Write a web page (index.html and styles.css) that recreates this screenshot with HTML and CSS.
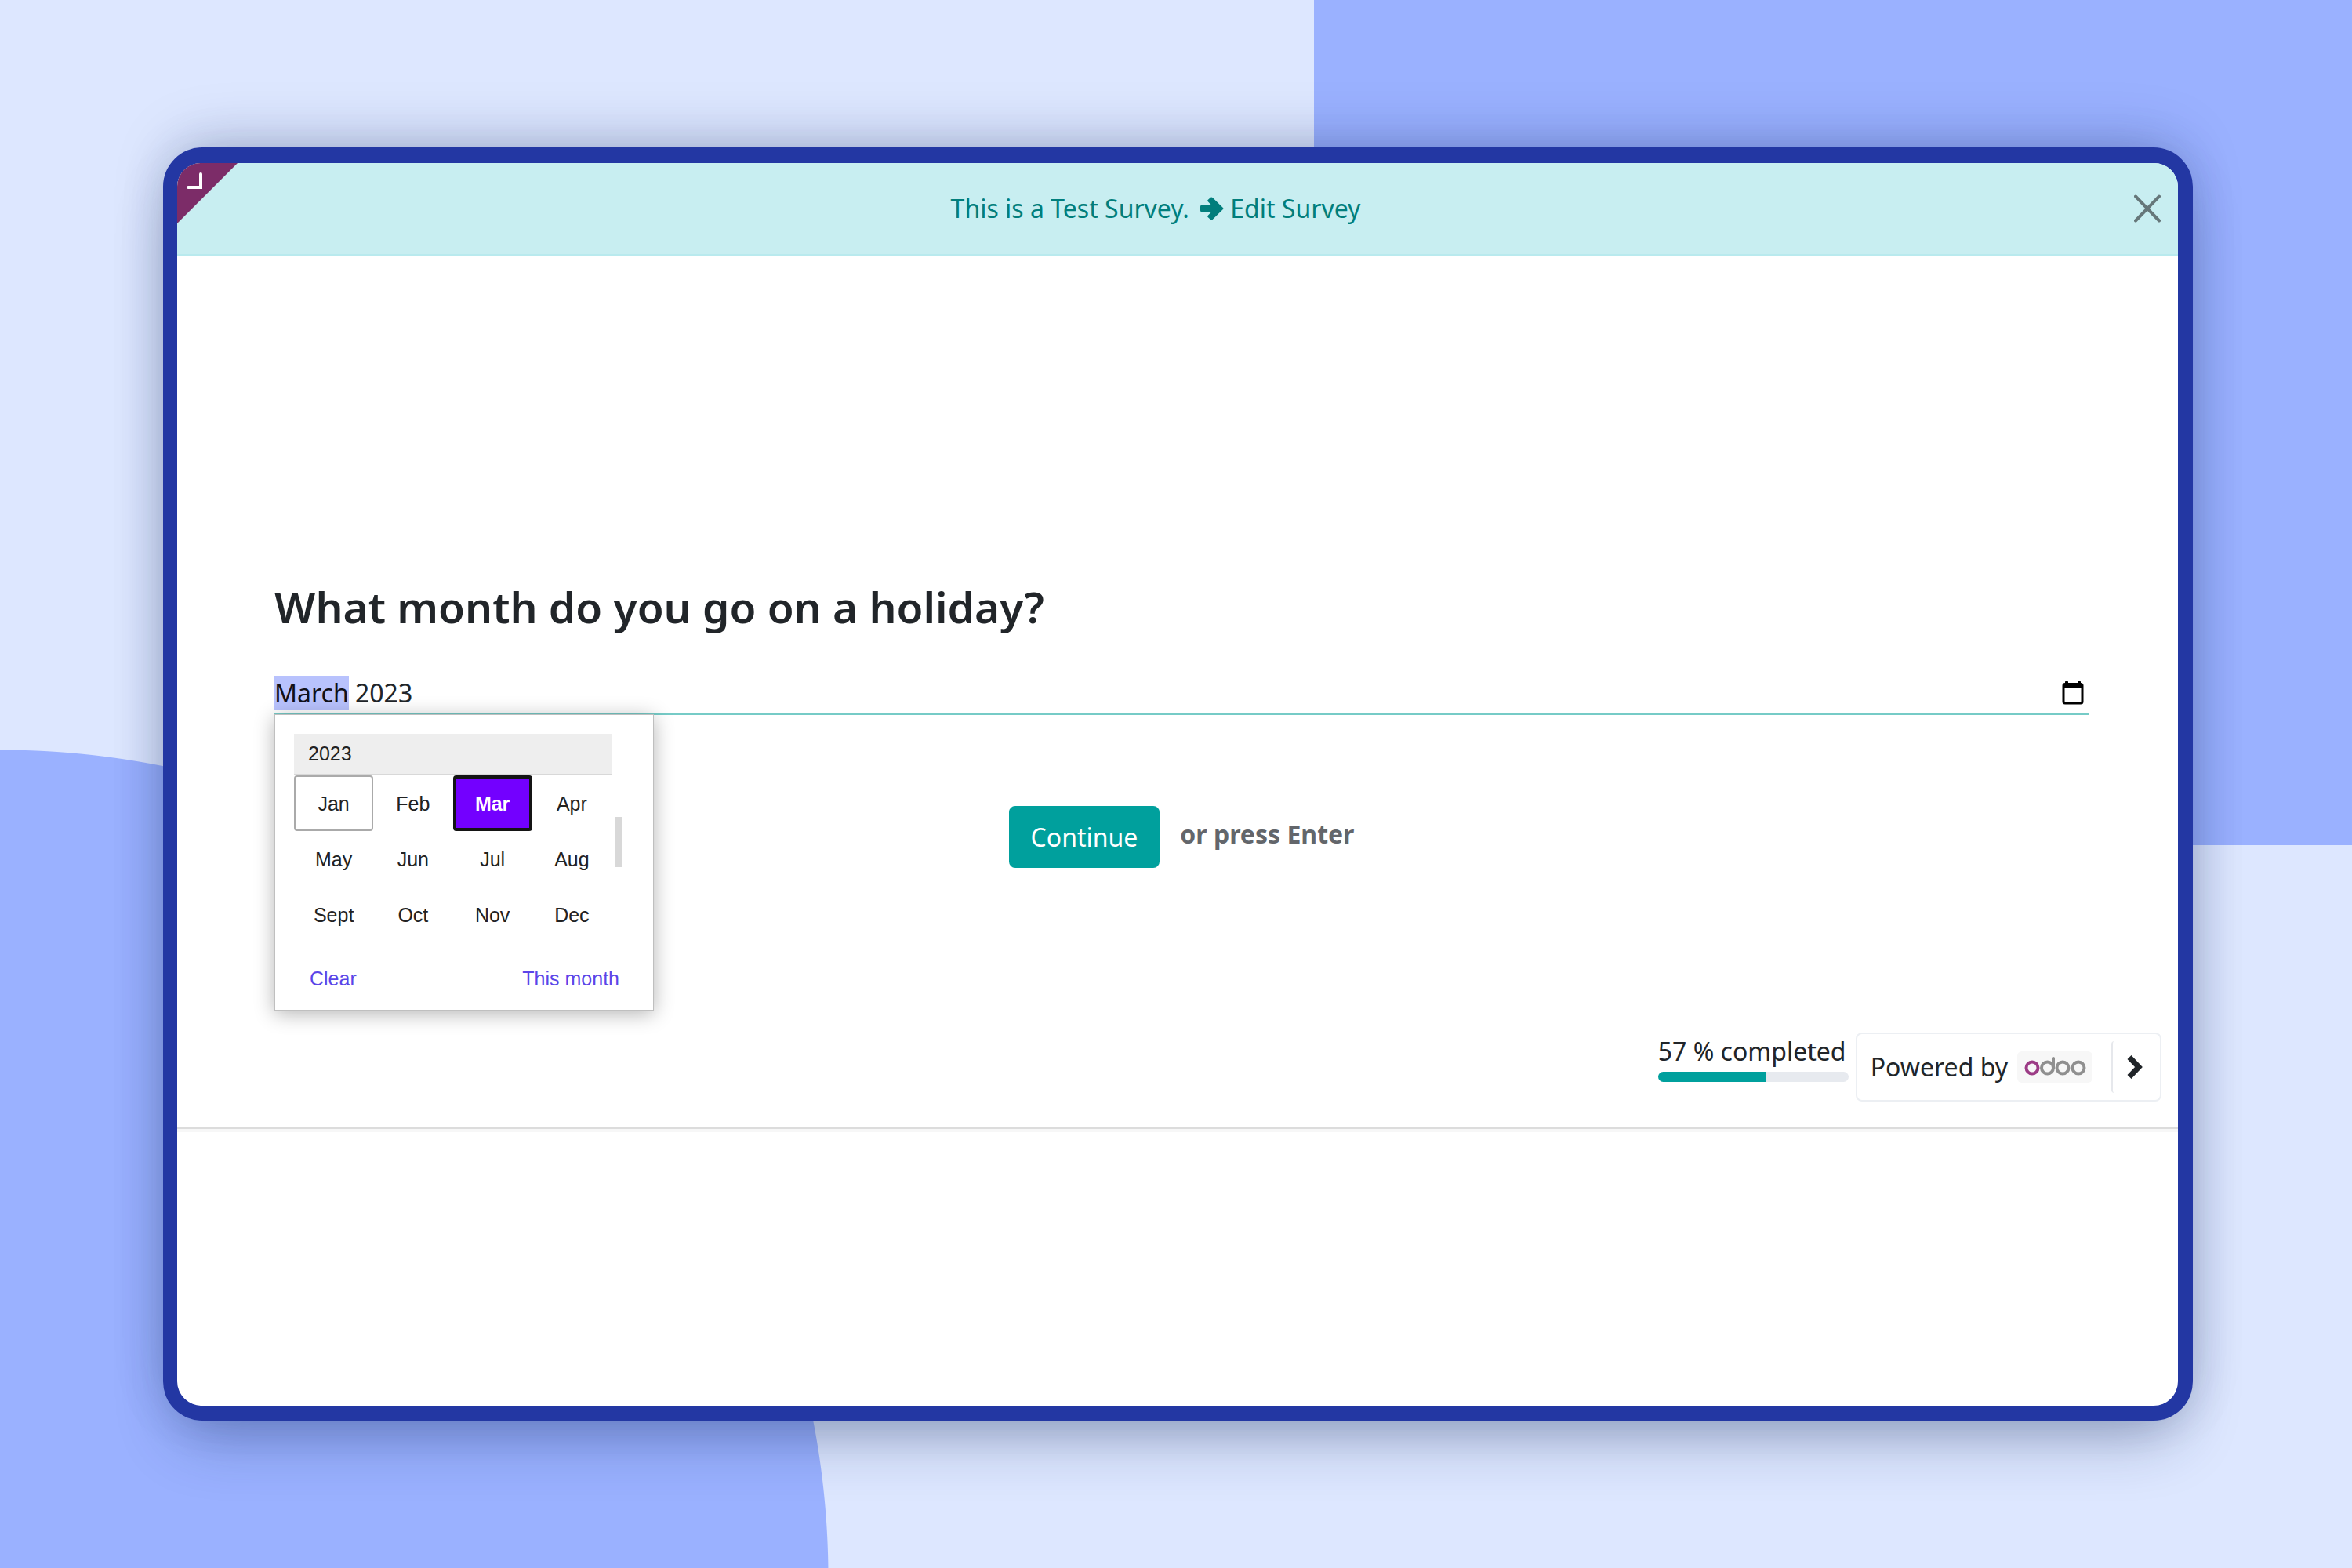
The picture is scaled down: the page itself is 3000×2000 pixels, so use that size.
FILE: index.html
```html
<!DOCTYPE html>
<html lang="en">
<head>
  <meta charset="utf-8">
  <meta name="viewport" content="width=device-width, initial-scale=1">
  <title>Survey</title>
  <link rel="stylesheet" href="styles.css">
</head>
<body>
  <div class="frame">
    <header class="banner">
      <a class="corner" href="#" aria-label="Open backend">
        <svg viewBox="0 0 77 77" aria-hidden="true">
          <path d="M0 0H77L0 77Z" fill="#7c2c68"/>
          <path d="M14 31H30V14" fill="none" stroke="#fff" stroke-width="4" stroke-linecap="round" stroke-linejoin="miter"/>
        </svg>
      </a>
      <p class="banner-text">This is a Test Survey.
        <a class="banner-link" href="#"><svg class="arrow" viewBox="0 0 28 28" aria-hidden="true"><path d="M2 9.700H13L9 5.700Q8.100 4.700 9 3.700L12.400 .800Q13.500 0 14.600 1L27 13Q28 14 27 15L14.600 27Q13.500 28 12.400 27.200L9 24.300Q8.100 23.300 9 22.300L13 18.300H2Q0 18.300 0 16.300V11.700Q0 9.700 2 9.700Z" fill="currentColor"/></svg>Edit Survey</a>
      </p>
      <button class="close" type="button" aria-label="Close">
        <svg viewBox="0 0 34 36" aria-hidden="true"><path d="M2 2.500L32 33.500M32 2.500L2 33.500" fill="none" stroke="currentColor" stroke-width="4" stroke-linecap="round"/></svg>
      </button>
    </header>

    <main class="survey">
      <form class="question">
        <h1 class="title"><label for="month">What month do you go on a holiday?</label></h1>
        <div class="field">
          <input class="month" id="month" type="text" value="March 2023" autocomplete="off" autofocus>
          <button class="calendar" type="button" aria-label="Show month picker">
            <svg viewBox="0 0 28 32" aria-hidden="true">
              <path d="M4 3H24Q27.500 3 27.500 6.500V27Q27.500 30.500 24 30.500H4Q.5 30.500 .5 27V6.500Q.5 3 4 3ZM3.500 10V26.500Q3.500 27.500 4.500 27.500H23.500Q24.500 27.500 24.500 26.500V10Z" fill="#000" fill-rule="evenodd"/>
              <path d="M6 2V4M22 2V4" stroke="#000" stroke-width="4" stroke-linecap="round"/>
            </svg>
          </button>

          <div class="picker">
            <div class="picker-body">
              <div class="picker-year">
                <div class="year">2023</div>
                <div class="months">
                  <button class="cell cell-first" type="button">Jan</button>
                  <button class="cell" type="button">Feb</button>
                  <button class="cell cell-selected" type="button" aria-pressed="true">Mar</button>
                  <button class="cell" type="button">Apr</button>
                  <button class="cell" type="button">May</button>
                  <button class="cell" type="button">Jun</button>
                  <button class="cell" type="button">Jul</button>
                  <button class="cell" type="button">Aug</button>
                  <button class="cell" type="button">Sept</button>
                  <button class="cell" type="button">Oct</button>
                  <button class="cell" type="button">Nov</button>
                  <button class="cell" type="button">Dec</button>
                </div>
              </div>
              <div class="scroll-thumb"></div>
            </div>
            <div class="picker-actions">
              <button class="action" type="button">Clear</button>
              <button class="action" type="button">This month</button>
            </div>
          </div>
        </div>
        <div class="submit-row">
          <button class="continue" type="submit">Continue</button>
          <p class="hint">or press Enter</p>
        </div>
      </form>

      <footer class="footer">
        <div class="progress">
          <span id="progress-label">57 % completed</span>
          <div class="track" role="progressbar" aria-labelledby="progress-label" aria-valuenow="57" aria-valuemin="0" aria-valuemax="100">
            <div class="fill" style="width: 57%"></div>
          </div>
        </div>
        <div class="brand">
          <a class="powered" href="#">Powered by
            <svg class="logo" viewBox="0 0 96 40" role="img" aria-label="odoo">
              <rect width="96" height="40" rx="6" fill="#f7f7f7"/>
              <g fill="none" stroke="#8f8f8f" stroke-width="4">
                <circle cx="38.500" cy="21" r="7.500"/>
                <path d="M46 21V9" stroke-linecap="round"/>
                <circle cx="58" cy="21" r="7.500"/>
                <circle cx="78" cy="21" r="7.500"/>
                <circle cx="19" cy="21" r="7.500" stroke="#9c3c86"/>
              </g>
            </svg>
          </a>
          <button class="next" type="button" aria-label="Next">
            <svg viewBox="0 0 20 30" aria-hidden="true"><path d="M3 2.500L15 15L3 27.500" fill="none" stroke="currentColor" stroke-width="7"/></svg>
          </button>
        </div>
      </footer>
    </main>
  </div>
  <script src="script.js"></script>
</body>
</html>
```
FILE: styles.css
```css
* {
  box-sizing: border-box;
}

body {
  position: relative;
  display: flex;
  min-height: 100vh;
  margin: 0;
  padding: 188px 203px 188px 208px;
  overflow-x: hidden;
  background:
    linear-gradient(#9ab1ff, #9ab1ff) top right / 44.133% 1078px no-repeat,
    radial-gradient(circle at 0 2013px, #9ab1ff 1056px, transparent 1057px),
    #dde7ff;
  color: #212529;
  font: 32px/44px "Noto Sans", "Open Sans", sans-serif;
}

h1,
p {
  margin: 0;
}

button {
  padding: 0;
  border: 0;
  background: none;
  color: inherit;
  font: inherit;
}

svg {
  display: block;
}

.frame {
  display: flex;
  flex: 1;
  flex-direction: column;
  min-width: 0;
  border: 19px solid #2337a3;
  border-width: 20px 19px 19px 18px;
  border-radius: 50px;
  background: #fff;
  box-shadow:
    0 0 60px rgba(20, 40, 90, 0.1),
    0 -20px 80px -20px rgba(20, 40, 90, 0.26),
    0 40px 80px -20px rgba(20, 40, 90, 0.32);
}

.banner {
  position: relative;
  display: flex;
  align-items: center;
  height: 118px;
  padding-right: 22px;
  border-bottom: 2px solid #b9eaee;
  border-radius: 30px 30px 0 0;
  background: #c8eef1;
  color: #017e7c;
}

.corner {
  position: absolute;
  top: 0;
  left: 0;
  overflow: hidden;
  width: 77px;
  border-top-left-radius: 30px;
}

.banner-text {
  flex: 1;
  text-align: center;
}

.banner-link {
  margin-left: 6px;
  color: inherit;
  text-decoration: none;
}

.arrow {
  display: inline-block;
  width: 30px;
  margin-right: 8px;
  vertical-align: -3px;
}

.close {
  width: 34px;
  color: #66777a;
}

.survey {
  border-bottom: 3px solid #dcdcdc;
  box-shadow: 0 4px 0 #f7f7f7;
}

.question {
  padding: 412px 114px 0 124px;
}

.title {
  font-size: 55px;
  font-weight: 600;
  line-height: 72px;
}

.field {
  position: relative;
  display: flex;
  align-items: center;
  margin-top: 48px;
  border-bottom: 3px solid #76cbc7;
}

.month {
  flex: 1;
  min-width: 0;
  height: 51px;
  padding: 0;
  border: 0;
  outline: 0;
  background: none;
  color: inherit;
  font: inherit;
}

.month::selection {
  background: #b8c2fd;
  color: #101018;
}

.calendar {
  width: 28px;
  margin-right: 6px;
}

.picker {
  position: absolute;
  top: 100%;
  left: 0;
  width: 484px;
  margin-top: 2px;
  padding: 24px 40px 24px 24px;
  border: 1px solid #bfbfbf;
  background: #fff;
  box-shadow: 0 4px 24px rgba(0, 0, 0, 0.3);
  color: #222;
  font: 25px/32px "Liberation Sans", Arial, sans-serif;
}

.picker-body {
  display: flex;
  gap: 4px;
  align-items: center;
}

.picker-year {
  flex: 1;
}

.year {
  padding: 9px 18px 10px;
  border-bottom: 2px solid #d8d8d8;
  background: #eee;
}

.months {
  display: grid;
  grid-template-columns: repeat(4, 1fr);
}

.cell {
  height: 71px;
  border-radius: 4px;
}

.cell-first {
  border: 2px solid #aaa;
}

.cell-selected {
  border: 4px solid #141414;
  background: #7300ff;
  color: #fff;
  font-weight: 700;
}

.scroll-thumb {
  width: 9px;
  height: 64px;
  margin-top: 10px;
  background: #d8d8d8;
}

.picker-actions {
  display: flex;
  justify-content: space-between;
  margin-top: 30px;
  padding: 0 3px 0 20px;
  color: #5b45e8;
}

.submit-row {
  display: flex;
  gap: 26px;
  justify-content: center;
  margin-top: 116px;
}

.continue {
  height: 79px;
  padding: 0 28px;
  border-radius: 8px;
  background: #00a09d;
  color: #fff;
}

.hint {
  padding-top: 14px;
  color: #63666b;
  font-size: 32px;
  font-weight: 700;
}

.footer {
  display: flex;
  gap: 9px;
  justify-content: flex-end;
  padding: 210px 21px 32px;
}

.progress {
  min-width: 243px;
  padding-top: 2px;
}

.track {
  overflow: hidden;
  height: 13px;
  margin-top: 4px;
  border-radius: 7px;
  background: #e7eaef;
}

.fill {
  height: 100%;
  background: #00a09d;
}

.brand {
  display: flex;
  align-items: center;
  height: 88px;
  border: 2px solid #eceff3;
  border-radius: 8px;
}

.powered {
  display: flex;
  gap: 12px;
  align-items: center;
  padding: 0 24px 0 17px;
  color: inherit;
  text-decoration: none;
}

.logo {
  width: 96px;
}

.next {
  height: 66px;
  padding: 0 22px 0 18px;
  border-left: 2px solid #e6e8ec;
  border-radius: 4px;
}

.next svg {
  width: 20px;
}
```
FILE: script.js
```js
// Start with the month part of the value selected
const month = document.getElementById("month");
month.focus();
month.setSelectionRange(0, 5);
```
